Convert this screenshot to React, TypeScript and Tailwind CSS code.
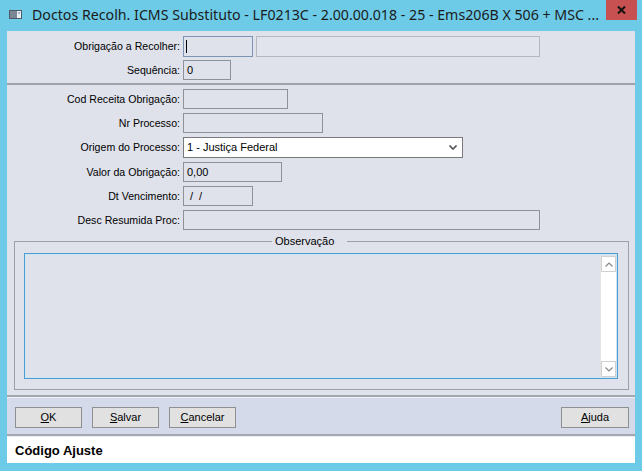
import React from "react";

const labelCls = "w-[173px] shrink-0 text-right pr-0 text-[10.6px] leading-[13px]";
const boxCls = "h-[20px] border border-[#8e9198] bg-[#dfe2eb] px-[3px] flex items-center leading-[13px]";

function Row({ label, children }: { label: string; children: React.ReactNode }) {
  return (
    <div className="flex items-center">
      <div className={labelCls}>{label}</div>
      <div className="ml-[3px] flex items-center">{children}</div>
    </div>
  );
}

function Button({ hot, rest, width = "w-[67px]" }: { hot: string; rest: string; width?: string }) {
  return (
    <button
      className={`${width} h-[21px] border border-[#8f8f8f] bg-[#e1e1e1] text-[11px] leading-[13px] text-black flex items-center justify-center`}
    >
      <span>
        <span className="underline underline-offset-[1px]">{hot}</span>
        {rest}
      </span>
    </button>
  );
}

export default function App() {
  return (
    <div className="w-[642px] h-[471px] bg-[#6dcbe8] flex flex-col font-['Liberation_Sans',Arial,sans-serif] text-[11px] text-black overflow-hidden">
      {/* title bar */}
      <div className="h-[31px] shrink-0 flex items-start">
        <svg className="ml-[9px] mt-[10px]" width="13" height="9" viewBox="0 0 13 9">
          <rect x="0" y="0" width="13" height="9" fill="#4f5a66" />
          <rect x="1" y="1" width="7" height="7" fill="#7b8794" />
          <rect x="8" y="1" width="4" height="7" fill="#e8eef2" />
          <rect x="9" y="2" width="2" height="2" fill="#9fb4c4" />
        </svg>
        <div className="ml-[10px] mt-[5px] whitespace-nowrap font-['Noto_Sans',sans-serif] text-[14.2px] leading-[20px] text-[#1b1b1b]">
          Doctos Recolh. ICMS Substituto - LF0213C - 2.00.00.018 - 25 - Ems206B X 506 + MSC ...
        </div>
        <div className="ml-auto mr-[5px] w-[31px] h-[20px] bg-[#c75050] flex items-center justify-center">
          <svg width="9" height="8" viewBox="0 0 9 8">
            <path d="M1 0.5 L8 7.5 M8 0.5 L1 7.5" stroke="#111" strokeWidth="2" />
          </svg>
        </div>
      </div>

      {/* client area */}
      <div className="flex-1 mx-[7px] bg-[#dfe2eb] flex flex-col">
        <div className="pt-[5px] pb-[3px] flex flex-col gap-[3px]">
          <Row label="Obrigação a Recolher:">
            <div className="w-[70px] h-[21px] border border-[#7d93b3] bg-[#dfe2eb] flex items-center pl-[2px]">
              <div className="w-[1px] h-[13px] bg-black" />
            </div>
            <div className="ml-[3px] w-[284px] h-[21px] border border-[#b4b8c0] bg-[#e1e4ec]" />
          </Row>
          <Row label="Sequência:">
            <div className={`${boxCls} w-[48px]`}>0</div>
          </Row>
        </div>
        <div className="h-[2px] bg-[#9da1a9]" />

        <div className="pt-[4px] flex flex-col gap-[4px]">
          <Row label="Cod Receita Obrigação:">
            <div className={`${boxCls} w-[105px]`} />
          </Row>
          <Row label="Nr Processo:">
            <div className={`${boxCls} w-[140px]`} />
          </Row>
          <Row label="Origem do Processo:">
            <div className="w-[280px] h-[21px] border border-[#7a7a7a] bg-white pl-[3px] pr-[5px] flex items-center justify-between leading-[13px]">
              <span>1 - Justiça Federal</span>
              <svg width="8" height="5" viewBox="0 0 8 5">
                <path d="M0.5 0.5 L4 4 L7.5 0.5" fill="none" stroke="#555" strokeWidth="1.6" />
              </svg>
            </div>
          </Row>
          <Row label="Valor da Obrigação:">
            <div className={`${boxCls} w-[99px]`}>0,00</div>
          </Row>
          <Row label="Dt Vencimento:">
            <div className={`${boxCls} w-[70px] pl-[6px]`}>
              <span className="tracking-[1.5px]">/ /</span>
            </div>
          </Row>
          <Row label="Desc Resumida Proc:">
            <div className={`${boxCls} w-[357px]`} />
          </Row>
        </div>

        {/* Observação group */}
        <div className="relative mt-[11px] ml-[7px] mr-[6px] border border-[#9ca0a8] pt-[11px] pl-[9px] pr-[10px] pb-[10px]">
          <span className="absolute top-[-7px] left-[257px] bg-[#dfe2eb] pl-[3px] pr-[13px] leading-[13px]">Observação</span>
          <div className="h-[126px] border border-[#4f9dd0] shadow-[inset_0_0_0_1px_#cde6f5] flex justify-end">
            <div className="mt-[2px] mb-[1px] mr-[1px] w-[16px] bg-white border-l border-[#e4e4e4] flex flex-col justify-between">
              <div className="h-[16px] border border-[#d0d0d0] flex items-center justify-center">
                <svg width="8" height="5" viewBox="0 0 8 5">
                  <path d="M0.5 4.5 L4 1 L7.5 4.5" fill="none" stroke="#888" strokeWidth="1.2" />
                </svg>
              </div>
              <div className="h-[16px] border border-[#d0d0d0] flex items-center justify-center">
                <svg width="8" height="5" viewBox="0 0 8 5">
                  <path d="M0.5 0.5 L4 4 L7.5 0.5" fill="none" stroke="#888" strokeWidth="1.2" />
                </svg>
              </div>
            </div>
          </div>
        </div>

        <div className="flex-1" />
        <div className="h-[2px] bg-[#a3a7b0]" />
        <div className="h-[1px] bg-[#eef0f5]" />

        {/* button bar */}
        <div className="h-[36px] bg-[#d5daea] flex items-start pt-[9px] pl-[8px] pr-[6px]">
          <Button hot="O" rest="K" />
          <div className="ml-[10px]">
            <Button hot="S" rest="alvar" />
          </div>
          <div className="ml-[10px]">
            <Button hot="C" rest="ancelar" />
          </div>
          <div className="ml-auto">
            <Button hot="A" rest="juda" width="w-[68px]" />
          </div>
        </div>
        <div className="h-[2px] bg-[#a3a7b0]" />
        <div className="h-[1px] bg-[#eef0f5]" />

        {/* status bar */}
        <div className="h-[26px] bg-white flex items-center pl-[8px] pt-[1px] text-[13px] font-bold leading-[16px]">
          Código Ajuste
        </div>
      </div>
      <div className="h-[8px] shrink-0" />
    </div>
  );
}
